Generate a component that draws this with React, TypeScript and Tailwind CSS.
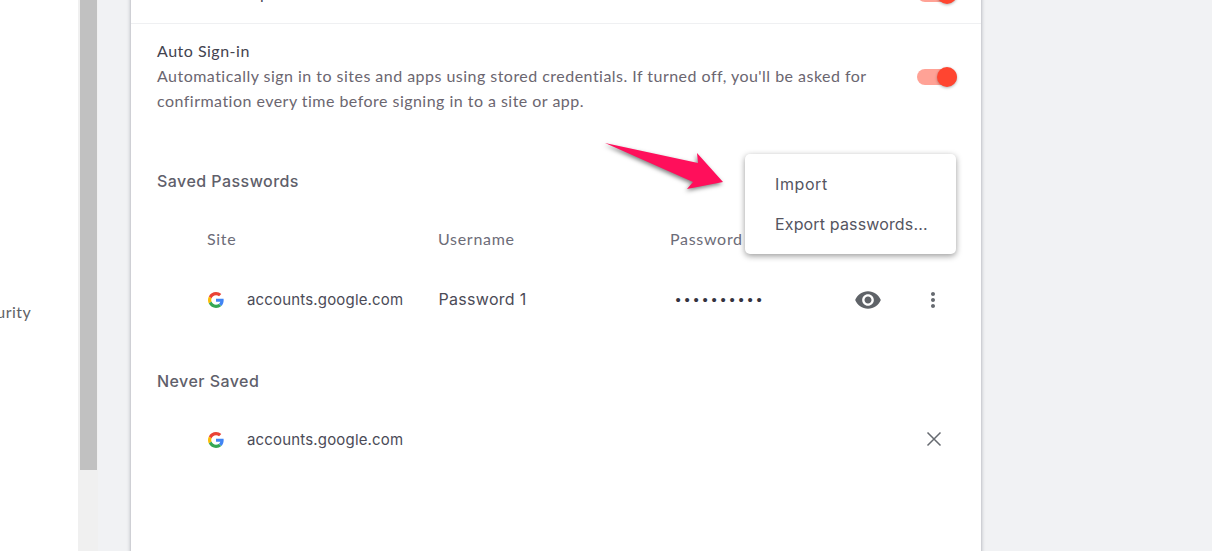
import React from 'react';

const GoogleIcon = () => (
  <svg viewBox="0 0 48 48" className="ml-px h-4 w-4 shrink-0">
    <path fill="#EA4335" d="M24 9.500c3.500 0 6.700 1.200 9.100 3.600l6.800-6.800C35.800 2.500 30.300 0 24 0 14.600 0 6.500 5.400 2.600 13.200l7.900 6.100C12.400 13.700 17.700 9.500 24 9.500z" />
    <path fill="#4285F4" d="M46.980 24.550c0-1.570-.15-3.090-.38-4.550H24v9.020h12.940c-.58 2.960-2.260 5.480-4.780 7.180l7.730 6c4.510-4.180 7.090-10.360 7.090-17.650z" />
    <path fill="#FBBC05" d="M10.530 28.590c-.48-1.450-.76-2.990-.76-4.590s.27-3.140.76-4.590l-7.980-6.190C.92 16.460 0 20.120 0 24c0 3.880.92 7.540 2.560 10.780l7.970-6.190z" />
    <path fill="#34A853" d="M24 48c6.480 0 11.930-2.130 15.890-5.810l-7.730-6c-2.150 1.450-4.920 2.300-8.160 2.300-6.260 0-11.570-4.220-13.470-9.910l-7.980 6.190C6.510 42.620 14.620 48 24 48z" />
  </svg>
);

const Toggle = () => (
  <div className="relative h-[16px] w-[40px] shrink-0 rounded-full bg-[#ffa296]">
    <div className="absolute right-0 top-[-2px] h-5 w-5 rounded-full bg-[#ff4530] shadow-[0_1px_3px_rgba(0,0,0,0.3)]" />
  </div>
);

export default function App() {
  return (
    <div className="relative flex h-[551px] w-[1212px] overflow-hidden bg-white font-['Lato',sans-serif] text-[16px] tracking-[0.5px]">
      <aside className="w-[78px] shrink-0 overflow-hidden">
        <div className="ml-[-30px] mt-[302px] leading-[20px] text-[#5f6368]">Security</div>
      </aside>

      <div className="w-5 shrink-0 bg-[#f0f0f0] pl-[2px] pr-px">
        <div className="h-[470px] bg-[#c1c1c1]" />
      </div>

      <main className="flex-1 bg-[#f1f2f4] pl-[33px]">
        <div className="mt-[-28px] h-[600px] w-[850px] bg-white shadow-[0_0_4px_rgba(60,64,80,0.45)]">
          <div className="flex h-[52px] items-center justify-between border-b border-[#eff0f2] pb-[9px] pl-[26px] pr-[24px]">
            <div className="text-[#4a4a55]">Offer to save passwords</div>
            <div className="mt-[2px]"><Toggle /></div>
          </div>

          <div className="flex items-center justify-between pl-[26px] pr-[24px] pt-[14px]">
            <div className="w-[730px]">
              <div className="leading-[25px] text-[#43434f]">Auto Sign-in</div>
              <div className="leading-[25px] tracking-[0.47px] text-[#6b6670]">
                Automatically sign in to sites and apps using stored credentials. If turned off, you'll be asked for confirmation every time before signing in to a site or app.
              </div>
            </div>
            <div className="mt-[3px]"><Toggle /></div>
          </div>

          <h2 className="mt-[56px] pl-[26px] font-['Inter',sans-serif] font-medium leading-[24px] tracking-[0.45px] text-[#5f5f6b]">Saved Passwords</h2>

          <div className="mt-[34px] grid grid-cols-[231px_232px_1fr] pl-[76px] leading-[24px] tracking-[0.7px] text-[#6c6c78]">
            <div>Site</div>
            <div>Username</div>
            <div>Password</div>
          </div>

          <div className="mt-[35px] grid h-6 grid-cols-[231.5px_232px_1fr] items-center pl-[76px] font-['Inter',sans-serif] text-[15px] tracking-[0.17px] text-[#4b4b57]">
            <div className="flex items-center gap-[23px]">
              <GoogleIcon />
              <span>accounts.google.com</span>
            </div>
            <div className="mt-[-2px] text-[16px] tracking-[0.3px]">Password 1</div>
            <div className="flex items-center">
              <span className="ml-[5px] font-['Liberation_Sans',sans-serif] text-[15px] tracking-[3.75px] text-[#33333f]">••••••••••</span>
              <svg viewBox="0 0 24 24" className="ml-[88px] h-[28px] w-[28px] fill-[#5f6368]">
                <path d="M12 4.500C7 4.500 2.730 7.610 1 12c1.730 4.390 6 7.500 11 7.500s9.270-3.110 11-7.500c-1.730-4.390-6-7.500-11-7.500zM12 17c-2.760 0-5-2.240-5-5s2.240-5 5-5 5 2.240 5 5-2.240 5-5 5zm0-8c-1.660 0-3 1.340-3 3s1.340 3 3 3 3-1.340 3-3-1.340-3-3-3z" />
              </svg>
              <svg viewBox="0 0 24 24" className="ml-[39px] h-6 w-6 fill-[#666a70]">
                <path d="M12 8c1.100 0 2-.9 2-2s-.9-2-2-2-2 .9-2 2 .9 2 2 2zm0 2c-1.100 0-2 .9-2 2s.9 2 2 2 2-.9 2-2-.9-2-2-2zm0 6c-1.100 0-2 .9-2 2s.9 2 2 2 2-.9 2-2-.9-2-2-2z" />
              </svg>
            </div>
          </div>

          <h2 className="mt-[59px] pl-[26px] font-['Inter',sans-serif] font-medium leading-[24px] tracking-[0.45px] text-[#5f5f6b]">Never Saved</h2>

          <div className="mt-[35px] flex h-6 items-center pl-[76px] pr-[35px] font-['Inter',sans-serif] text-[15px] tracking-[0.17px] text-[#4b4b57]">
            <div className="flex items-center gap-[23px]">
              <GoogleIcon />
              <span>accounts.google.com</span>
            </div>
            <svg viewBox="0 0 24 24" className="ml-auto mt-[-2px] h-6 w-6 fill-none stroke-[#666a70] stroke-[1.500]">
              <path d="M5.500 5.500l13 13M18.500 5.500l-13 13" />
            </svg>
          </div>
        </div>
      </main>

      <div className="absolute left-[745px] top-[154px] flex h-[100px] w-[211px] flex-col rounded-[5px] bg-white pl-[30px] pt-[10px] font-['Inter',sans-serif] tracking-[0.15px] text-[#55555f] shadow-[0_2px_6px_rgba(0,0,0,0.4)]">
        <div className="flex h-10 items-center tracking-[0.6px]">Import</div>
        <div className="flex h-10 items-center">Export passwords...</div>
      </div>

      <svg viewBox="0 0 130 60" className="absolute left-[600px] top-[138px] h-[60px] w-[130px] drop-shadow-[-1px_2px_2px_rgba(0,0,0,0.5)]">
        <polygon fill="#ff0f5b" points="5,5 98,25 97,15 123,44 87,51 93,44" />
      </svg>
    </div>
  );
}
